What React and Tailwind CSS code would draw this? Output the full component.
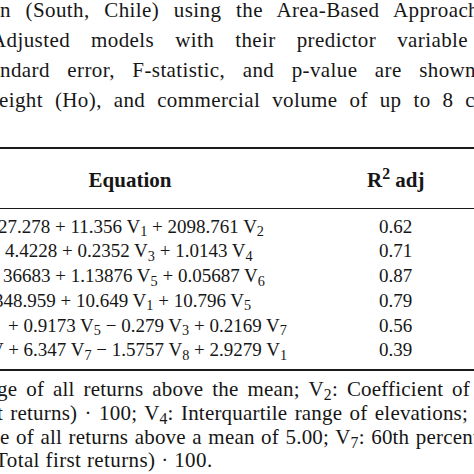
export default function App() {
  const J = "text-justify [text-align-last:justify]";
  return (
    <div className="w-[474px] h-[474px] overflow-hidden bg-white text-[#161616] font-['Liberation_Serif',serif]">
      {/* caption */}
      <div className="mt-[-5px] text-[21px] leading-[30px] tracking-[0.4px]">
        <div className={"w-[479px] " + J}>n (South, Chile) using the Area-Based Approach</div>
        <div className={"ml-[-9px] w-[477px] " + J}>Adjusted models with their predictor variable</div>
        <div className={"w-[476px] " + J}>ndard error, F-statistic, and p-value are shown</div>
        <div className={"ml-[-1px] w-[476px] " + J}>eight (Ho), and commercial volume of up to 8 c</div>
      </div>

      {/* table */}
      <div className="mt-[32px] h-[2px] bg-[#1a1a1a]" />
      <div className="flex h-[59px] pt-[16px] text-[21px] leading-[30px] font-bold">
        <div className="w-[260px] text-center">Equation</div>
        <div className="ml-[107px] w-[57px] text-center whitespace-nowrap">
          R<sup>2</sup> adj
        </div>
      </div>
      <div className="h-px bg-[#1a1a1a]" />
      <div className="pt-[5.5px] text-[19px] leading-[24.8px]">
        <div className="flex">
          <div className="w-[367px] whitespace-nowrap">
            <div className="ml-[-2px]">27.278 + 11.356 V<sub>1</sub> + 2098.761 V<sub>2</sub></div>
          </div>
          <div className="w-[57px] text-center">0.62</div>
        </div>
        <div className="flex">
          <div className="w-[367px] whitespace-nowrap">
            <div className="ml-[5px]">4.4228 + 0.2352 V<sub>3</sub> + 1.0143 V<sub>4</sub></div>
          </div>
          <div className="w-[57px] text-center">0.71</div>
        </div>
        <div className="flex">
          <div className="w-[367px] whitespace-nowrap">
            <div className="ml-[3px]">36683 + 1.13876 V<sub>5</sub> + 0.05687 V<sub>6</sub></div>
          </div>
          <div className="w-[57px] text-center">0.87</div>
        </div>
        <div className="flex">
          <div className="w-[367px] whitespace-nowrap">
            <div className="ml-[-6px]">348.959 + 10.649 V<sub>1</sub> + 10.796 V<sub>5</sub></div>
          </div>
          <div className="w-[57px] text-center">0.79</div>
        </div>
        <div className="flex">
          <div className="w-[367px] whitespace-nowrap">
            <div className="ml-[8px]">+ 0.9173 V<sub>5</sub> − 0.279 V<sub>3</sub> + 0.2169 V<sub>7</sub></div>
          </div>
          <div className="w-[57px] text-center">0.56</div>
        </div>
        <div className="flex">
          <div className="w-[367px] whitespace-nowrap">
            <div className="ml-[-10px]">V + 6.347 V<sub>7</sub> − 1.5757 V<sub>8</sub> + 2.9279 V<sub>1</sub></div>
          </div>
          <div className="w-[57px] text-center">0.39</div>
        </div>
      </div>
      <div className="mt-[6px] h-[2px] bg-[#1a1a1a]" />

      {/* footnote */}
      <div className="mt-[7px] text-[21px] leading-[23.7px] tracking-[0.2px]">
        <div className={"ml-[-3px] w-[473px] " + J}>
          ge of all returns above the mean; V<sub>2</sub>: Coefficient of
        </div>
        <div className={"ml-[-3px] w-[471px] " + J}>
          t returns) · 100; V<sub>4</sub>: Interquartile range of elevations;
        </div>
        <div className={"w-[479px] " + J}>
          e of all returns above a mean of 5.00; V<sub>7</sub>: 60th percent
        </div>
        <div className="ml-[-5px] whitespace-nowrap tracking-[0.4px]">Total first returns) · 100.</div>
      </div>
    </div>
  );
}
